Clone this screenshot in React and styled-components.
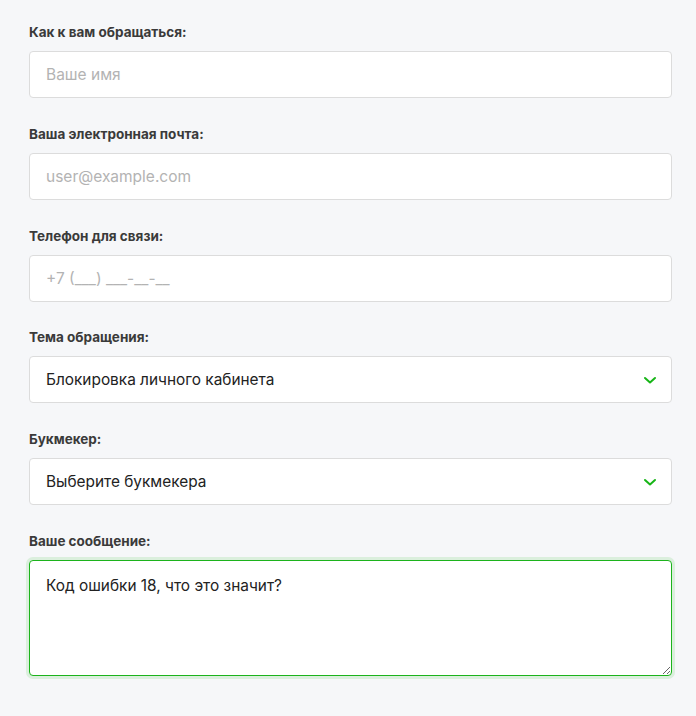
import React, { useState } from 'react';
import styled, { createGlobalStyle } from 'styled-components';

const GlobalStyle = createGlobalStyle`
  html, body {
    margin: 0;
    padding: 0;
    background: #f6f7f9;
  }
  * { box-sizing: border-box; }
`;

const Form = styled.form`
  display: flex;
  flex-direction: column;
  gap: 25.8px;
  padding: 22px 24px 40px 29px;
  font-family: Inter, "Noto Sans", sans-serif;
`;

const Field = styled.div`
  display: flex;
  flex-direction: column;
  gap: 9px;
`;

const Label = styled.label`
  font-size: 13.5px;
  font-weight: 700;
  line-height: 20px;
  color: #3a3a3a;
`;

const Input = styled.input`
  height: 47px;
  width: 100%;
  padding: 0 16px;
  border: 1px solid #dcdcdc;
  border-radius: 4px;
  background: #fff;
  font-family: Inter, "Noto Sans", sans-serif;
  font-size: 15.5px;
  color: #222;
  outline: none;
  &::placeholder { color: #b3b3b3; }
`;

const SelectBox = styled.div`
  position: relative;
  height: 47px;
  display: flex;
  align-items: center;
  justify-content: space-between;
  padding: 0 14px 0 16px;
  border: 1px solid #dcdcdc;
  border-radius: 4px;
  background: #fff;
  font-size: 15.4px;
  color: #222;
  cursor: pointer;
`;

const TextArea = styled.textarea`
  height: 116px;
  width: 100%;
  padding: 14px 16px;
  border: 1px solid #1cb31c;
  border-radius: 4px;
  background: #fff;
  box-shadow: 0 0 0 3px rgba(28, 179, 28, 0.12);
  font-family: Inter, "Noto Sans", sans-serif;
  font-size: 15.4px;
  line-height: 22px;
  color: #222;
  outline: none;
  resize: vertical;
`;

const Chevron = () => (
  <svg width="14" height="14" viewBox="0 0 14 14" fill="none">
    <path d="M2 5l5 4.5L12 5" stroke="#17b517" strokeWidth="2" strokeLinecap="round" strokeLinejoin="round" />
  </svg>
);

export default function App() {
  const [msg, setMsg] = useState('Код ошибки 18, что это значит?');
  return (
    <>
      <GlobalStyle />
      <Form onSubmit={e => e.preventDefault()}>
        <Field>
          <Label>Как к вам обращаться:</Label>
          <Input placeholder="Ваше имя" />
        </Field>
        <Field>
          <Label>Ваша электронная почта:</Label>
          <Input placeholder="user@example.com" />
        </Field>
        <Field>
          <Label>Телефон для связи:</Label>
          <Input placeholder="+7 (___) ___-__-__" />
        </Field>
        <Field>
          <Label>Тема обращения:</Label>
          <SelectBox>
            <span>Блокировка личного кабинета</span>
            <Chevron />
          </SelectBox>
        </Field>
        <Field>
          <Label>Букмекер:</Label>
          <SelectBox>
            <span>Выберите букмекера</span>
            <Chevron />
          </SelectBox>
        </Field>
        <Field>
          <Label>Ваше сообщение:</Label>
          <TextArea value={msg} onChange={e => setMsg(e.target.value)} />
        </Field>
      </Form>
    </>
  );
}
